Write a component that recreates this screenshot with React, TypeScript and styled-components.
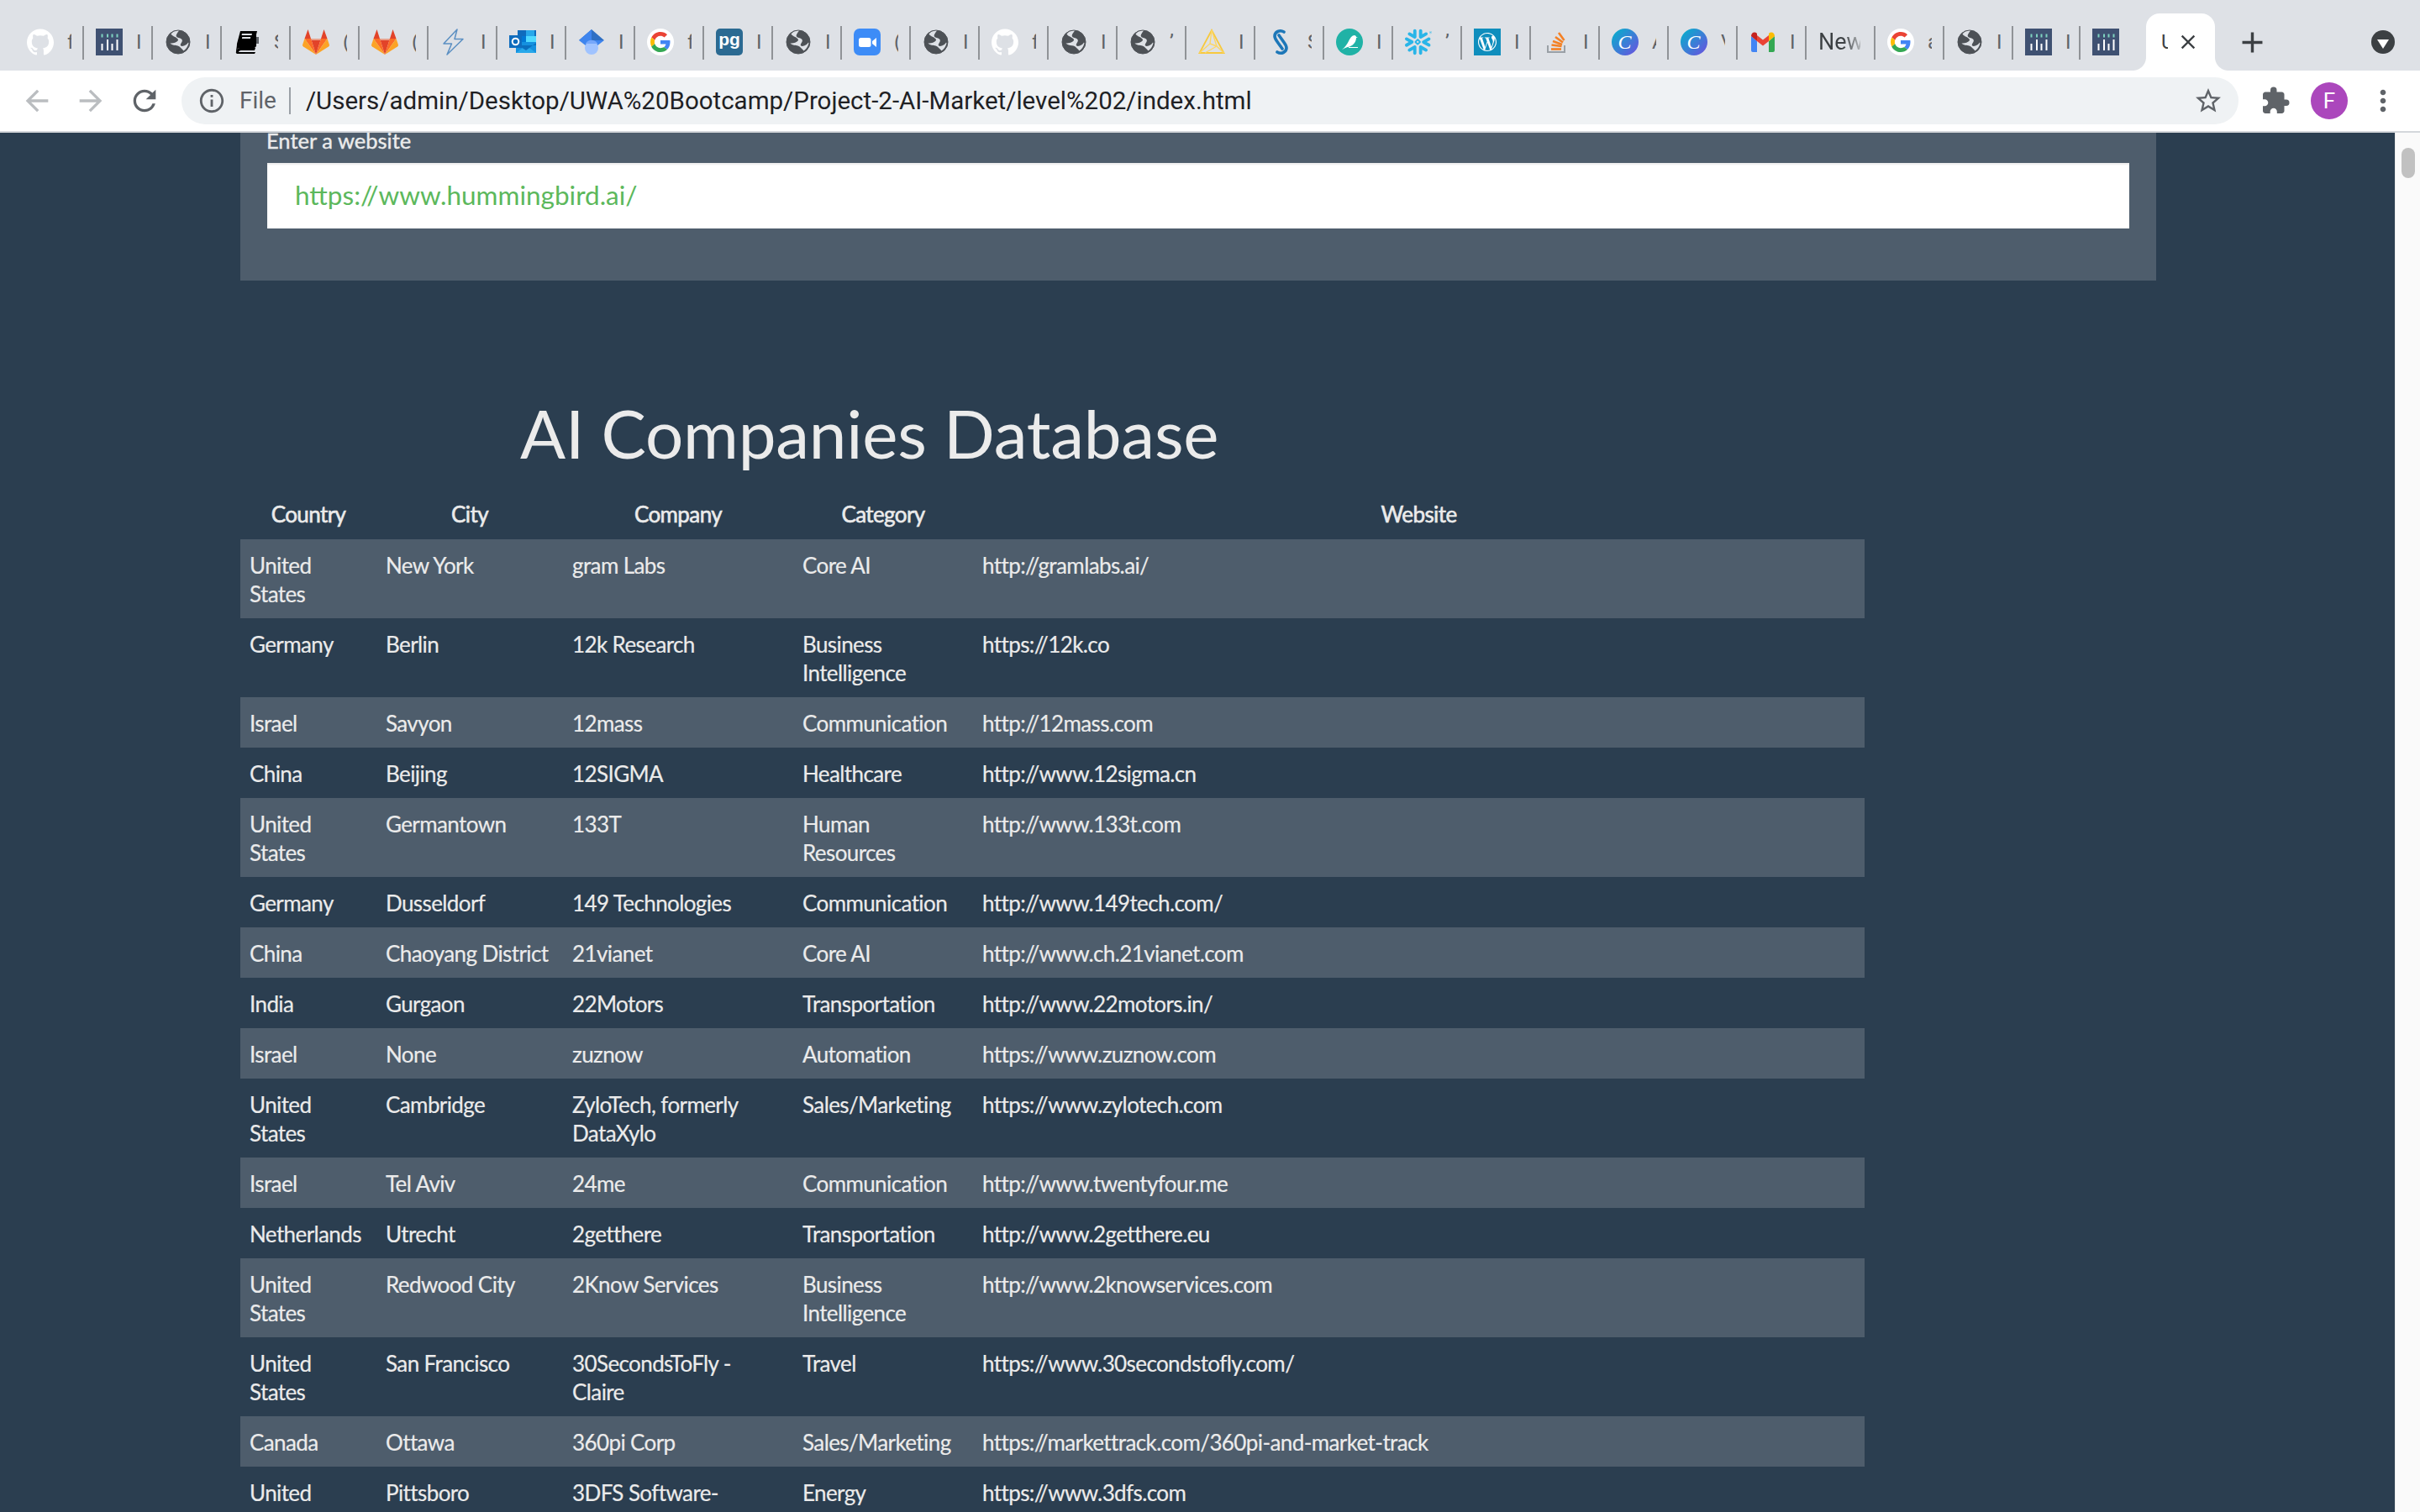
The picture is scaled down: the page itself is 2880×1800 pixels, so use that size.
import React from 'react'
import styled, { createGlobalStyle } from 'styled-components'
import {
  MdAdd,
  MdArrowBack,
  MdArrowForward,
  MdClose,
  MdExtension,
  MdInfoOutline,
  MdMoreVert,
  MdRefresh,
  MdStarBorder,
} from 'react-icons/md'
import { SiGithub, SiSnowflake, SiWordpress } from 'react-icons/si'

const GlobalStyle = createGlobalStyle`
  html, body {
    margin: 0;
    padding: 0;
    height: 100%;
    overflow: hidden;
    background: #2b3e50;
  }
  * {
    box-sizing: border-box;
  }
`

const Window = styled.div`
  width: 2880px;
  height: 1800px;
  display: flex;
  flex-direction: column;
  overflow: hidden;
`

const TabStrip = styled.div`
  height: 84px;
  flex: none;
  display: flex;
  align-items: flex-end;
  padding-left: 17px;
  background: #dee1e6;
`

const Tab = styled.div<{ $width?: number; $last?: boolean }>`
  width: ${({ $width }) => $width || 82}px;
  height: 68px;
  flex: none;
  display: flex;
  align-items: center;
  padding-left: 15px;
  position: relative;
  &::after {
    content: '';
    display: ${({ $last }) => ($last ? 'none' : 'block')};
    position: absolute;
    right: -1px;
    top: 15px;
    width: 2px;
    height: 40px;
    background: #909397;
  }
`

const Favicon = styled.div`
  width: 32px;
  height: 32px;
  flex: none;
  display: flex;
  align-items: center;
  justify-content: center;
  svg {
    display: block;
  }
`

const TabTitle = styled.span`
  width: 5px;
  margin-left: 16px;
  overflow: hidden;
  white-space: nowrap;
  font: 24px Roboto, sans-serif;
  color: #5f6368;
`

const NewTitle = styled.span`
  width: 50px;
  overflow: hidden;
  white-space: nowrap;
  font: 27px Roboto, sans-serif;
  color: transparent;
  background: linear-gradient(90deg, #3c4043 60%, #b4b7ba 100%);
  -webkit-background-clip: text;
  background-clip: text;
`

const ActiveTab = styled.div`
  width: 82px;
  height: 68px;
  flex: none;
  display: flex;
  align-items: center;
  padding-left: 18px;
  position: relative;
  background: #fff;
  border-radius: 16px 16px 0 0;
  &::before,
  &::after {
    content: '';
    position: absolute;
    bottom: 0;
    width: 16px;
    height: 16px;
  }
  &::before {
    left: -16px;
    background: radial-gradient(circle at 0 0, #dee1e6 15.5px, #fff 16.5px);
  }
  &::after {
    right: -16px;
    background: radial-gradient(circle at 100% 0, #dee1e6 15.5px, #fff 16.5px);
  }
`

const ActiveTitle = styled.span`
  width: 8px;
  overflow: hidden;
  white-space: nowrap;
  font: 24px Roboto, sans-serif;
  color: #3c4043;
`

const CloseButton = styled.span`
  display: flex;
  margin-left: 10px;
  color: #3c4043;
`

const NewTabButton = styled.div`
  flex: none;
  display: flex;
  margin: 0 0 13px 24px;
  color: #3c4043;
`

const TabSearch = styled.div`
  width: 28px;
  height: 28px;
  flex: none;
  margin: 0 0 20px 121px;
  border-radius: 50%;
  background: #3c4043;
  display: flex;
  align-items: center;
  justify-content: center;
  &::after {
    content: '';
    margin-top: 4px;
    border-left: 7px solid transparent;
    border-right: 7px solid transparent;
    border-top: 11px solid #fff;
  }
`

const Toolbar = styled.div`
  height: 74px;
  flex: none;
  display: flex;
  align-items: center;
  padding-left: 24px;
  background: #fff;
  border-bottom: 2px solid #d4d7db;
`

const NavButton = styled.span<{ $muted?: boolean }>`
  width: 40px;
  height: 40px;
  flex: none;
  display: flex;
  margin-right: 24px;
  color: ${({ $muted }) => ($muted ? '#babdc0' : '#5f6368')};
`

const Omnibox = styled.div`
  width: 2448px;
  height: 56px;
  flex: none;
  display: flex;
  align-items: center;
  padding: 0 18px 0 19px;
  background: #eff2f4;
  border-radius: 28px;
`

const InfoIcon = styled.span`
  display: flex;
  color: #5f6368;
`

const Scheme = styled.span`
  margin-left: 16px;
  padding-right: 15px;
  border-right: 2px solid #9aa0a6;
  font: 28px/32px Roboto, sans-serif;
  color: #5f6368;
`

const Url = styled.span`
  flex: 1;
  margin-left: 18px;
  font: 29.5px/32px Roboto, sans-serif;
  color: #202124;
`

const StarIcon = styled.span`
  display: flex;
  color: #5f6368;
`

const ToolIcon = styled.span`
  display: flex;
  margin-left: 26px;
  color: #5f6368;
`

const Avatar = styled.span`
  width: 44px;
  height: 44px;
  flex: none;
  margin-left: 24px;
  border-radius: 50%;
  background: #ab47bc;
  color: #fff;
  display: flex;
  align-items: center;
  justify-content: center;
  font: 26px Roboto, sans-serif;
`

const MenuIcon = styled.span`
  display: flex;
  margin-left: 22px;
  color: #5f6368;
`

const Viewport = styled.div`
  flex: 1;
  min-height: 0;
  display: flex;
  overflow: hidden;
`

const Page = styled.main`
  flex: 1;
  min-width: 0;
  padding-left: 286px;
  background: #2b3e50;
  color: #ebebeb;
  font-family: Lato, "Open Sans", sans-serif;
  overflow: hidden;
`

const Scrollbar = styled.div`
  width: 30px;
  flex: none;
  padding: 18px 0 0 7px;
  background: #fafafa;
  border-left: 1px solid #ececec;
`

const Thumb = styled.div`
  width: 16px;
  height: 36px;
  border-radius: 8px;
  background: #c1c1c1;
`

const SearchPanel = styled.section`
  width: 2280px;
  padding: 0 32px 62px;
  background: #4e5d6c;
`

const FieldLabel = styled.label`
  display: block;
  height: 18px;
  margin: 0 0 18px -1px;
  font-size: 25.5px;
  line-height: 18px;
  font-weight: 400;
  -webkit-text-stroke: 0.4px #ebebeb;
  color: #ebebeb;
`

const SiteInput = styled.input`
  display: block;
  width: 2216px;
  height: 78px;
  padding: 0 33px 2px;
  border: 0;
  outline: 0;
  border-radius: 0;
  background: #fff;
  box-shadow: inset 0 2px 2px rgba(0, 0, 0, 0.08);
  font-family: Lato, "Open Sans", sans-serif;
  font-size: 31.5px;
  color: #5cb85c;
`

const Heading = styled.h1`
  margin: 133px 0 18px;
  padding-left: 333px;
  font-size: 80px;
  line-height: 96px;
  font-weight: 400;
  letter-spacing: -0.2px;
  color: #ebebeb;
  white-space: nowrap;
`

const CompanyTable = styled.table`
  width: 1933px;
  table-layout: fixed;
  border-collapse: collapse;
  font-size: 26px;
  letter-spacing: -0.6px;
  line-height: 34px;
`

const HeadCell = styled.th`
  height: 61px;
  padding: 0 11px;
  font-weight: 400;
  -webkit-text-stroke: 0.6px #ebebeb;
  text-align: center;
  vertical-align: middle;
`

const Row = styled.tr<{ $striped: boolean }>`
  background: ${({ $striped }) => ($striped ? '#4e5d6c' : 'transparent')};
`

const Cell = styled.td`
  padding: 14px 11px 12px;
  vertical-align: top;
  -webkit-text-stroke: 0.2px #ebebeb;
`

/* favicons */

const Globe = () => (
  <svg width="32" height="32" viewBox="0 0 32 32">
    <circle cx="16" cy="16" r="14" fill="#4d5156" />
    <path
      d="M17 2.500c-2 3-4 5-3 7 1 2 4 1 6 3 2 2 0 4-1 6-1 2 1 3 4 2 2-1 4-2 5-4l.5 1c-1 4-3 7-6 9-2-2-4-5-7-6-3-1-6 0-9-3 2 0 5 0 8-2 2-1 2-3 0-4-2-2-5-2-7-5 2-3 6-5 10-5z"
      fill="#dee1e6"
    />
    <circle cx="16" cy="16" r="14" fill="none" stroke="#4d5156" strokeWidth="1" />
  </svg>
)

const Mixer = () => (
  <svg width="32" height="32" viewBox="0 0 32 32">
    <rect width="32" height="32" fill="#3f5172" />
    <g fill="#7fd3c0">
      <rect x="6.500" y="6.500" width="2" height="4" />
      <rect x="13" y="6.500" width="2" height="4" />
      <rect x="18.500" y="6.500" width="2" height="4" />
      <rect x="24.500" y="6.500" width="2" height="4" />
    </g>
    <g fill="#fff">
      <rect x="6.500" y="18" width="2" height="8" />
      <rect x="13" y="13" width="2" height="13" />
      <rect x="18.500" y="18" width="2" height="8" />
      <rect x="24.500" y="13" width="2" height="13" />
    </g>
  </svg>
)

const Notebook = () => (
  <svg width="32" height="32" viewBox="0 0 32 32">
    <path d="M8 3h20l-1 4v14l-2 2H8c-3 0-4 1-4 3l-1 2c0-3 1-7 1-10z" fill="#000" />
    <path d="M4 25c1-2 3-2 5-2h17l-1 3H9c-2 0-3 1-3 2h20l-1 2H4c-2-1-1-3 0-5z" fill="#000" />
    <rect x="11" y="6" width="12" height="2" fill="#dee1e6" transform="skewX(-10)" />
    <rect x="12" y="10" width="10" height="2" fill="#dee1e6" transform="skewX(-10)" />
    <rect x="27" y="10" width="3" height="8" fill="#5f6368" />
  </svg>
)

const GitLab = () => (
  <svg width="32" height="32" viewBox="0 0 32 32">
    <path d="M16 31L10 12h12z" fill="#e24329" />
    <path d="M16 31L10 12H2.500z" fill="#fc6d26" />
    <path d="M16 31l6-19h7.500z" fill="#fc6d26" />
    <path d="M2.500 12L0 19.500c0 1 .5 1.500 1 2L16 31z" fill="#fca326" />
    <path d="M29.500 12l2.500 7.500c0 1-.5 1.500-1 2L16 31z" fill="#fca326" />
    <path d="M2.500 12L6.500 1 10 12zM29.500 12L25.500 1 22 12z" fill="#e24329" />
    <path d="M10 12h12l-1 2H11z" fill="#e8a08c" />
  </svg>
)

const Bolt = () => (
  <svg width="32" height="32" viewBox="0 0 32 32">
    <path
      d="M20 1L4 18l9.500 0L8 31 27 12.500h-10z"
      fill="none"
      stroke="#5b8fc2"
      strokeWidth="1.500"
      strokeLinejoin="round"
    />
  </svg>
)

const Outlook = () => (
  <svg width="32" height="32" viewBox="0 0 32 32">
    <rect x="10" y="2" width="22" height="14" fill="#0f6cbd" />
    <rect x="20" y="2" width="10" height="7" fill="#28a8ea" />
    <rect x="20" y="9" width="12" height="7" fill="#50d9ff" />
    <rect x="10" y="9" width="10" height="7" fill="#0078d4" />
    <path d="M8 16h24v13H8z" fill="#1490df" />
    <path d="M8 29l12-9 12 9z" fill="#28a8ea" />
    <path d="M8 18l12 8 12-9v3H8z" fill="#0a6fbe" />
    <rect y="8" width="15" height="15" fill="#0f6cbd" />
    <circle cx="7.500" cy="15.500" r="3.800" fill="none" stroke="#fff" strokeWidth="2" />
  </svg>
)

const Scholar = () => (
  <svg width="32" height="32" viewBox="0 0 32 32">
    <path d="M16 1L1 14h30z" fill="#2f6fc4" />
    <path d="M16 1L1 14h15z" fill="#3f85ee" />
    <path d="M1 14l9 7h12l9-7z" fill="#3f85ee" />
    <circle cx="16" cy="23" r="8" fill="#a0c3ff" />
    <path d="M9 18a8 8 0 0 1 14 0z" fill="#76a7fa" />
  </svg>
)

const GoogleG = () => (
  <svg width="32" height="32" viewBox="0 0 32 32">
    <circle cx="16" cy="16" r="16" fill="#fff" />
    <g transform="translate(4 4) scale(.5)">
      <path
        d="M24 9.500c3.540 0 6.710 1.220 9.210 3.600l6.850-6.850C35.900 2.380 30.470 0 24 0 14.620 0 6.510 5.380 2.560 13.220l7.980 6.190C12.430 13.720 17.740 9.500 24 9.500z"
        fill="#EA4335"
      />
      <path
        d="M46.980 24.550c0-1.570-.15-3.090-.38-4.550H24v9.020h12.940c-.58 2.960-2.260 5.480-4.780 7.180l7.730 6c4.510-4.180 7.090-10.360 7.090-17.650z"
        fill="#4285F4"
      />
      <path
        d="M10.530 28.590c-.48-1.450-.76-2.990-.76-4.590s.27-3.140.76-4.590l-7.980-6.190C.92 16.460 0 20.120 0 24c0 3.880.92 7.540 2.560 10.780l7.970-6.190z"
        fill="#FBBC05"
      />
      <path
        d="M24 48c6.480 0 11.930-2.130 15.890-5.810l-7.730-6c-2.150 1.450-4.920 2.300-8.160 2.300-6.260 0-11.570-4.220-13.470-9.910l-7.980 6.190C6.510 42.620 14.620 48 24 48z"
        fill="#34A853"
      />
    </g>
  </svg>
)

const PgAdmin = () => (
  <svg width="32" height="32" viewBox="0 0 32 32">
    <rect width="32" height="32" rx="5" fill="#2b6a92" />
    <text x="16" y="20" textAnchor="middle" fontFamily="Liberation Sans" fontWeight="700" fontSize="21" fill="#fff">
      pg
    </text>
  </svg>
)

const Zoom = () => (
  <svg width="32" height="32" viewBox="0 0 32 32">
    <rect width="32" height="32" rx="7" fill="#3d8cf7" />
    <rect x="6" y="11" width="14.500" height="11" rx="2.500" fill="#fff" />
    <path d="M22 15l5-4v11l-5-4z" fill="#fff" />
  </svg>
)

const Prism = () => (
  <svg width="32" height="32" viewBox="0 0 32 32">
    <path d="M16 2L1.500 29h29z" fill="none" stroke="#f7c93e" strokeWidth="1.800" />
    <path d="M16 2l-2 16L1.500 29M16 2l6 19 8.500 8M14 18l8 3-14 8" fill="none" stroke="#fbd667" strokeWidth="1.400" />
  </svg>
)

const SasMark = () => (
  <svg width="32" height="32" viewBox="0 0 32 32">
    <path
      d="M20 4c-5-3-11 0-11 5 0 3 2 5 4 8l5 7M12 28c5 3 11 0 11-5 0-3-2-5-4-8l-5-7"
      fill="none"
      stroke="#1d77b8"
      strokeWidth="3.600"
      strokeLinecap="round"
    />
  </svg>
)

const Bird = () => (
  <svg width="32" height="32" viewBox="0 0 32 32">
    <circle cx="16" cy="16" r="16" fill="#20b2a6" />
    <path d="M7 25c3-2 6-6 8-10 2-4 4-7 7-7 1 0 2 1 2 2l2 .5-2 .5c0 5-4 10-10 11-2 .500-5 2-7 3z" fill="#fff" />
    <rect x="15" y="22" width="11" height="1" fill="#fff" />
  </svg>
)

const WordPress = () => (
  <svg width="32" height="32" viewBox="0 0 32 32">
    <rect width="32" height="32" fill="#0f8ebd" />
    <SiWordpress x="5" y="5" size={22} color="#fff" />
  </svg>
)

const Stack = () => (
  <svg width="32" height="32" viewBox="0 0 32 32">
    <path d="M6 20v8h20v-8" fill="none" stroke="#9aa0a6" strokeWidth="2" />
    <g stroke="#f48024" strokeWidth="2.600" fill="none">
      <path d="M10 24.500h12" />
      <path d="M10.500 19.500l12 1.500" />
      <path d="M12 15l11 4" />
      <path d="M15 10l9 6.500" />
      <path d="M19 5l6.500 9" />
    </g>
  </svg>
)

const Canva = () => (
  <svg width="32" height="32" viewBox="0 0 32 32">
    <defs>
      <linearGradient id="canvaFill" x1="0" y1="0" x2="1" y2="1">
        <stop offset="0" stopColor="#00b5cb" />
        <stop offset="1" stopColor="#6f4de0" />
      </linearGradient>
    </defs>
    <circle cx="16" cy="16" r="16" fill="url(#canvaFill)" />
    <text x="15.500" y="24" textAnchor="middle" fontFamily="Liberation Serif" fontStyle="italic" fontSize="24" fill="#fff">
      C
    </text>
  </svg>
)

const Gmail = () => (
  <svg width="32" height="32" viewBox="0 0 32 32">
    <path d="M2 28V9l7 6v13H4a2 2 0 0 1-2-2z" fill="#4285f4" />
    <path d="M30 28V9l-7 6v13h5a2 2 0 0 0 2-2z" fill="#34a853" />
    <path d="M9 15l7 5.500 7-5.500V8l-7 5.500L9 8z" fill="#ea4335" />
    <path d="M2 9c0-4 4-6 7-3v9z" fill="#c5221f" />
    <path d="M30 9c0-4-4-6-7-3v9z" fill="#fbbc04" />
  </svg>
)

const GitHubMark = () => <SiGithub size={32} color="#fff" />
const SnowflakeMark = () => <SiSnowflake size={32} color="#29b5e8" />

type TabItem = { icon: React.FC; title: string; width?: number; last?: boolean }

const tabs: TabItem[] = [
  { icon: GitHubMark, title: 'fa' },
  { icon: Mixer, title: 'I' },
  { icon: Globe, title: 'I' },
  { icon: Notebook, title: 'S' },
  { icon: GitLab, title: '(' },
  { icon: GitLab, title: '(' },
  { icon: Bolt, title: 'I' },
  { icon: Outlook, title: 'I' },
  { icon: Scholar, title: 'I' },
  { icon: GoogleG, title: 'f' },
  { icon: PgAdmin, title: 'I' },
  { icon: Globe, title: 'I' },
  { icon: Zoom, title: '(' },
  { icon: Globe, title: 'I' },
  { icon: GitHubMark, title: 'f' },
  { icon: Globe, title: 'I' },
  { icon: Globe, title: '’' },
  { icon: Prism, title: 'I' },
  { icon: SasMark, title: 'S' },
  { icon: Bird, title: 'I' },
  { icon: SnowflakeMark, title: '’' },
  { icon: WordPress, title: 'I' },
  { icon: Stack, title: 'I' },
  { icon: Canva, title: 'A' },
  { icon: Canva, title: 'V' },
  { icon: Gmail, title: 'I' },
  { icon: GoogleG, title: 'a' },
  { icon: Globe, title: 'I' },
  { icon: Mixer, title: 'I', width: 80 },
  { icon: Mixer, title: '', width: 79, last: true },
]

const companies = [
  ['United States', 'New York', 'gram Labs', 'Core AI', 'http://gramlabs.ai/'],
  ['Germany', 'Berlin', '12k Research', 'Business Intelligence', 'https://12k.co'],
  ['Israel', 'Savyon', '12mass', 'Communication', 'http://12mass.com'],
  ['China', 'Beijing', '12SIGMA', 'Healthcare', 'http://www.12sigma.cn'],
  ['United States', 'Germantown', '133T', 'Human Resources', 'http://www.133t.com'],
  ['Germany', 'Dusseldorf', '149 Technologies', 'Communication', 'http://www.149tech.com/'],
  ['China', 'Chaoyang District', '21vianet', 'Core AI', 'http://www.ch.21vianet.com'],
  ['India', 'Gurgaon', '22Motors', 'Transportation', 'http://www.22motors.in/'],
  ['Israel', 'None', 'zuznow', 'Automation', 'https://www.zuznow.com'],
  ['United States', 'Cambridge', 'ZyloTech, formerly DataXylo', 'Sales/Marketing', 'https://www.zylotech.com'],
  ['Israel', 'Tel Aviv', '24me', 'Communication', 'http://www.twentyfour.me'],
  ['Netherlands', 'Utrecht', '2getthere', 'Transportation', 'http://www.2getthere.eu'],
  ['United States', 'Redwood City', '2Know Services', 'Business Intelligence', 'http://www.2knowservices.com'],
  ['United States', 'San Francisco', '30SecondsToFly - Claire', 'Travel', 'https://www.30secondstofly.com/'],
  ['Canada', 'Ottawa', '360pi Corp', 'Sales/Marketing', 'https://markettrack.com/360pi-and-market-track'],
  ['United States', 'Pittsboro', '3DFS Software-Defined Storage', 'Energy', 'https://www.3dfs.com'],
]

const columns = [
  { title: 'Country', width: 162 },
  { title: 'City', width: 222 },
  { title: 'Company', width: 274 },
  { title: 'Category', width: 214 },
  { title: 'Website', width: 1061 },
]

const App: React.FC = () => (
  <Window>
    <GlobalStyle />
    <TabStrip>
      {tabs.map((tab, index) => (
        <React.Fragment key={index}>
          {index === 26 && (
            <Tab>
              <NewTitle>New</NewTitle>
            </Tab>
          )}
          <Tab $width={tab.width} $last={tab.last}>
            <Favicon>
              <tab.icon />
            </Favicon>
            <TabTitle>{tab.title}</TabTitle>
          </Tab>
        </React.Fragment>
      ))}
      <ActiveTab>
        <ActiveTitle>U</ActiveTitle>
        <CloseButton>
          <MdClose size={28} />
        </CloseButton>
      </ActiveTab>
      <NewTabButton>
        <MdAdd size={41} />
      </NewTabButton>
      <TabSearch />
    </TabStrip>
    <Toolbar>
      <NavButton $muted>
        <MdArrowBack size={40} />
      </NavButton>
      <NavButton $muted>
        <MdArrowForward size={40} />
      </NavButton>
      <NavButton>
        <MdRefresh size={40} />
      </NavButton>
      <Omnibox>
        <InfoIcon>
          <MdInfoOutline size={34} />
        </InfoIcon>
        <Scheme>File</Scheme>
        <Url>/Users/admin/Desktop/UWA%20Bootcamp/Project-2-AI-Market/level%202/index.html</Url>
        <StarIcon>
          <MdStarBorder size={36} />
        </StarIcon>
      </Omnibox>
      <ToolIcon>
        <MdExtension size={36} />
      </ToolIcon>
      <Avatar>F</Avatar>
      <MenuIcon>
        <MdMoreVert size={40} />
      </MenuIcon>
    </Toolbar>
    <Viewport>
      <Page>
        <SearchPanel>
          <FieldLabel htmlFor="site">Enter a website</FieldLabel>
          <SiteInput id="site" readOnly value="https://www.hummingbird.ai/" />
        </SearchPanel>
        <Heading>AI Companies Database</Heading>
        <CompanyTable>
          <colgroup>
            {columns.map((column) => (
              <col key={column.title} width={column.width} />
            ))}
          </colgroup>
          <thead>
            <tr>
              {columns.map((column) => (
                <HeadCell key={column.title}>{column.title}</HeadCell>
              ))}
            </tr>
          </thead>
          <tbody>
            {companies.map((company, index) => (
              <Row key={company[4]} $striped={index % 2 === 0}>
                {company.map((value) => (
                  <Cell key={value}>{value}</Cell>
                ))}
              </Row>
            ))}
          </tbody>
        </CompanyTable>
      </Page>
      <Scrollbar>
        <Thumb />
      </Scrollbar>
    </Viewport>
  </Window>
)

export default App
